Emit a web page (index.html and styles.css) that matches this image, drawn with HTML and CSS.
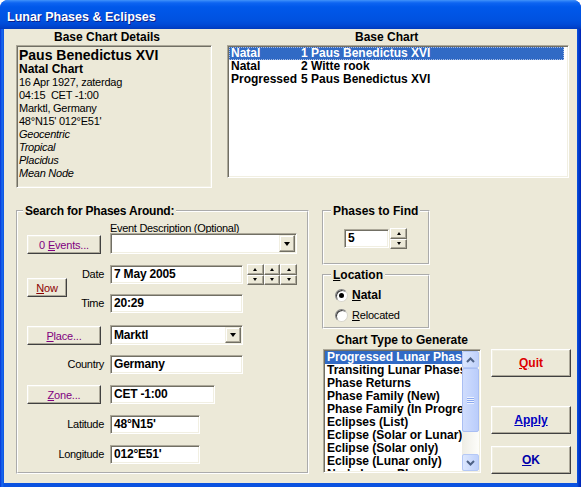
FILE: index.html
```html
<!DOCTYPE html>
<html lang="en">
<head>
<meta charset="utf-8">
<title>Lunar Phases &amp; Eclipses</title>
<link rel="stylesheet" href="styles.css">
</head>
<body>
<div class="window">
  <div class="titlebar"><span class="title">Lunar Phases &amp; Eclipses</span></div>
  <div class="client">
    <div class="top">
      <section class="details-col">
        <div class="hdr hdr-details">Base Chart Details</div>
        <div class="details sunken">
          <div class="d-name">Paus Benedictus XVI</div>
          <div class="d-type">Natal Chart</div>
          <div class="d-line">16 Apr 1927, zaterdag</div>
          <div class="d-line">04:15&nbsp; CET -1:00</div>
          <div class="d-line">Marktl, Germany</div>
          <div class="d-line">48°N15' 012°E51'</div>
          <div class="d-line it">Geocentric</div>
          <div class="d-line it">Tropical</div>
          <div class="d-line it">Placidus</div>
          <div class="d-line it">Mean Node</div>
        </div>
      </section>
      <section class="base-col">
        <div class="hdr hdr-base">Base Chart</div>
        <div class="base-list sunken white">
          <div class="brow sel"><span class="c1">Natal</span><span>1 Paus Benedictus XVI</span></div>
          <div class="brow"><span class="c1">Natal</span><span>2 Witte rook</span></div>
          <div class="brow"><span class="c1">Progressed</span><span>5 Paus Benedictus XVI</span></div>
        </div>
      </section>
    </div>

    <div class="bottom">
      <fieldset class="group search">
        <legend>Search for Phases Around:</legend>
        <div class="search-body">
          <div class="ev-cap">Event Description (Optional)</div>
          <div class="row r-events">
            <div class="lcell"><button class="btn small purple">0 <u>E</u>vents...</button></div>
            <div class="combo sunken white w-event"><span class="val"></span><span class="dd"><i class="tri-down"></i></span></div>
          </div>
          <div class="dt-grid">
            <button class="btn now"><u>N</u>ow</button>
            <div class="lbl l-date">Date</div>
            <div class="field sunken white w-date g-date">7 May 2005</div>
            <div class="spin3">
              <span class="sbtn"><i class="tri-up-s"></i></span>
              <span class="sbtn"><i class="tri-up-s"></i></span>
              <span class="sbtn"><i class="tri-up-s"></i></span>
              <span class="sbtn"><i class="tri-dn-s"></i></span>
              <span class="sbtn"><i class="tri-dn-s"></i></span>
              <span class="sbtn"><i class="tri-dn-s"></i></span>
            </div>
            <div class="lbl l-time">Time</div>
            <div class="field sunken white w-date g-time">20:29</div>
          </div>
          <div class="row r-place">
            <div class="lcell"><button class="btn small purple btn-place"><u>P</u>lace...</button></div>
            <div class="combo sunken white w-place"><span class="val">Marktl</span><span class="dd"><i class="tri-down"></i></span></div>
          </div>
          <div class="row r-country">
            <div class="lcell lbl">Country</div>
            <div class="field sunken white w-date">Germany</div>
          </div>
          <div class="row r-zone">
            <div class="lcell"><button class="btn small purple"><u>Z</u>one...</button></div>
            <div class="field sunken white w-zone">CET -1:00</div>
          </div>
          <div class="row r-lat">
            <div class="lcell lbl">Latitude</div>
            <div class="field sunken white w-lat">48°N15'</div>
          </div>
          <div class="row r-lon">
            <div class="lcell lbl">Longitude</div>
            <div class="field sunken white w-lat">012°E51'</div>
          </div>
        </div>
      </fieldset>

      <div class="right">
        <fieldset class="group phases">
          <legend>Phases to Find</legend>
          <div class="ph-body">
            <div class="field sunken white w-ph">5</div>
            <div class="spin2">
              <span class="sbtn"><i class="tri-up-s"></i></span>
              <span class="sbtn"><i class="tri-dn-s"></i></span>
            </div>
          </div>
        </fieldset>
        <fieldset class="group location">
          <legend><u>L</u>ocation</legend>
          <div class="loc-body">
            <div class="radio-row"><span class="radio on"><i></i></span><span class="rlabel b"><u>N</u>atal</span></div>
            <div class="radio-row"><span class="radio"></span><span class="rlabel"><u>R</u>elocated</span></div>
          </div>
        </fieldset>
        <div class="chart-area">
          <div class="chart-col">
            <div class="hdr hdr-chart">Chart Type to Generate</div>
            <div class="chartlist sunken white">
              <div class="items">
                <div class="crow sel">Progressed Lunar Phases</div>
                <div class="crow">Transiting Lunar Phases</div>
                <div class="crow">Phase Returns</div>
                <div class="crow">Phase Family (New)</div>
                <div class="crow">Phase Family (In Progress)</div>
                <div class="crow">Eclipses (List)</div>
                <div class="crow">Eclipse (Solar or Lunar)</div>
                <div class="crow">Eclipse (Solar only)</div>
                <div class="crow">Eclipse (Lunar only)</div>
                <div class="crow">Node Lunar Phases</div>
              </div>
              <div class="vscroll">
                <div class="sb-btn"><svg width="9" height="6" viewBox="0 0 9 6"><path d="M1 5 L4.5 1.5 L8 5" fill="none" stroke="#4D6185" stroke-width="2"/></svg></div>
                <div class="sb-thumb"><span class="grip"></span></div>
                <div class="sb-btn sb-down"><svg width="9" height="6" viewBox="0 0 9 6"><path d="M1 1 L4.5 4.5 L8 1" fill="none" stroke="#4D6185" stroke-width="2"/></svg></div>
              </div>
            </div>
          </div>
          <div class="btn-col">
            <button class="btn big quit"><u>Q</u>uit</button>
            <button class="btn big apply"><u>Apply</u></button>
            <button class="btn big ok"><u>O</u>K</button>
          </div>
        </div>
      </div>
    </div>
  </div>
</div>
</body>
</html>
```

FILE: styles.css
```css
* { box-sizing: border-box; }
html, body { margin: 0; padding: 0; }
body {
  width: 581px; height: 487px; overflow: hidden; background: #fff;
  font-family: "Liberation Sans", Arial, sans-serif; font-size: 11px; color: #000;
}
.window {
  width: 581px; height: 487px; display: flex; flex-direction: column;
  border-radius: 8px 8px 0 0; overflow: hidden;
  background: linear-gradient(to right, #0831d9 0, #0b4fe0 1px, #1a6af0 2px, #0b52e0 4px, #0b52e0 577px, #0038c8 579px, #0023b5 581px);
}
.titlebar {
  height: 29px; flex: none; padding-left: 7px;
  background: linear-gradient(to bottom, #4595f8 0, #2b80f8 1px, #0d64f1 3px, #0058ea 7px, #0055e5 14px, #0052e0 20px, #004bd8 24px, #0042cb 27px, #0039bc 29px);
}
.title {
  display: block; color: #fff; padding-top: 5px;
  font: bold 12.5px/24px "Liberation Sans", Arial, sans-serif;
  text-shadow: 1px 1px 0 #0a1f8c;
}
.client { flex: 1; margin: 0 4px 4px; background: #ECE9D8; }

.sunken {
  border: 1px solid; border-color: #ACA899 #fff #fff #ACA899;
  box-shadow: inset 1px 1px 0 #716F64, inset -1px -1px 0 #F1EFE2;
}
.white { background: #fff; }

/* top */
.top { display: flex; align-items: flex-start; padding-left: 12px; }
.hdr { font: bold 12px/16px "Liberation Sans", Arial, sans-serif; height: 16px; white-space: nowrap; }
.details-col { width: 196px; }
.hdr-details { padding-left: 38px; }
.details { height: 143px; padding: 1px 0 0 2px; overflow: hidden; }
.d-name { font: bold 14px/16px "Liberation Sans", Arial, sans-serif; white-space: nowrap; }
.d-type { font: bold 12px/13px "Liberation Sans", Arial, sans-serif; }
.d-line { font-size: 11px; line-height: 13px; letter-spacing: -0.25px; white-space: nowrap; }
.d-line.it { font-style: italic; }

.base-col { margin-left: 15px; width: 342px; }
.hdr-base { padding-left: 128px; }
.base-list { height: 133px; padding: 1px 4px 1px 1px; }
.brow { display: flex; height: 13px; font: bold 12px/13px "Liberation Sans", Arial, sans-serif; padding-left: 2px; white-space: nowrap; }
.brow.sel, .crow.sel { background: #316AC5; color: #fff; }
.brow.sel { outline: 1px dotted #a9bde3; outline-offset: -1px; }
.c1 { width: 70px; flex: none; }

/* bottom */
.bottom { display: flex; align-items: flex-start; margin-top: 16px; padding-left: 12px; }
.group { margin: 0; padding: 0; border: 2px groove #fff; min-width: 0; }
.group legend { padding: 0 2px; font: bold 12px/14px "Liberation Sans", Arial, sans-serif; white-space: nowrap; }
.search { width: 293px; height: 270px; }
.search legend { margin-left: 5px; letter-spacing: -0.2px; }
.search-body { padding: 3px 0 0 9px; }
.ev-cap { height: 12px; line-height: 14px; padding-left: 83px; letter-spacing: -0.3px; white-space: nowrap; }
.row { display: flex; align-items: flex-start; }
.lcell { width: 77px; flex: none; margin-right: 6px; }
.lbl { text-align: right; letter-spacing: -0.3px; line-height: 19px; white-space: nowrap; }

.btn {
  background: #ECE9D8; padding: 0; margin: 0;
  border: 1px solid; border-color: #fff #404040 #404040 #fff;
  box-shadow: inset -1px -1px 0 #ACA899, inset 1px 1px 0 #F1EFE2;
  font-family: "Liberation Sans", Arial, sans-serif; font-size: 11px; letter-spacing: -0.2px;
  display: block; text-align: center;
}
.btn.small { width: 74px; height: 19px; }
.purple { color: #800080; }
.r-events { height: 21px; }
.r-events .btn { margin-top: 2px; }

.combo { display: flex; padding: 1px; }
.combo .val { flex: 1; font: bold 12px "Liberation Sans", Arial, sans-serif; padding-left: 2px; letter-spacing: -0.2px; align-self: center; }
.dd {
  width: 16px; flex: none; background: #ECE9D8;
  border: 1px solid; border-color: #F1EFE2 #716F64 #716F64 #F1EFE2;
  box-shadow: inset -1px -1px 0 #ACA899, inset 1px 1px 0 #fff;
  display: flex; align-items: center; justify-content: center;
}
.tri-down { width: 0; height: 0; border-left: 3.5px solid transparent; border-right: 3.5px solid transparent; border-top: 4px solid #000; }
.w-event { width: 187px; height: 21px; }
.w-place { width: 133px; height: 20px; }

.field { font: bold 12px/17px "Liberation Sans", Arial, sans-serif; padding-left: 3px; letter-spacing: -0.2px; height: 19px; white-space: nowrap; }
.w-date { width: 133px; }
.w-zone { width: 105px; }
.w-lat { width: 90px; }
.w-ph { width: 45px; }

.dt-grid {
  display: grid; grid-template-columns: 40px 37px 139px 54px; grid-template-rows: 19px 19px;
  row-gap: 10px; margin-top: 11px;
}
.now { grid-column: 1; grid-row: 1 / 3; align-self: start; margin-top: 13px; width: 40px; height: 19px; color: #8B0000; }
.l-date { grid-column: 2; grid-row: 1; }
.l-time { grid-column: 2; grid-row: 2; }
.g-date { grid-column: 3; grid-row: 1; margin-left: 6px; }
.g-time { grid-column: 3; grid-row: 2; margin-left: 6px; }
.spin3 {
  grid-column: 4; grid-row: 1; margin: -1px 0 0 4px; width: 50px; height: 21px;
  display: grid; grid-template-columns: repeat(3, 1fr); grid-template-rows: 1fr 1fr;
}
.sbtn {
  background: #ECE9D8; border: 1px solid; border-color: #fff #716F64 #716F64 #fff;
  box-shadow: inset -1px -1px 0 #ACA899;
  display: flex; align-items: center; justify-content: center;
}
.tri-up-s { width: 1px; height: 0; border-left: 2px solid transparent; border-right: 2px solid transparent; border-bottom: 3px solid #000; }
.tri-dn-s { width: 1px; height: 0; border-left: 2px solid transparent; border-right: 2px solid transparent; border-top: 3px solid #000; }

.r-place { margin-top: 12px; }
.btn-place { margin-top: 1px; }
.r-country { margin-top: 10px; }
.r-zone { margin-top: 11px; }
.r-lat { margin-top: 11px; }
.r-lon { margin-top: 11px; }

/* right side */
.right { margin-left: 13px; display: flex; flex-direction: column; }
.phases { width: 108px; height: 61px; }
.phases legend, .location legend { margin-left: 7px; }
.ph-body { display: flex; padding: 11px 0 0 20px; }
.spin2 { margin: -1px 0 0 1px; width: 17px; height: 21px; display: grid; grid-template-rows: 1fr 1fr; }
.location { width: 108px; height: 61px; margin-top: 3px; }
.loc-body { padding: 6px 0 0 11px; }
.radio-row { display: flex; align-items: center; height: 14px; }
.radio-row + .radio-row { margin-top: 6px; }
.radio {
  width: 13px; height: 13px; border-radius: 50%; background: #fff; flex: none;
  border: 1px solid; border-color: #808080 #d8d6cc #d8d6cc #808080;
  box-shadow: inset 1px 1px 0 #404040;
  display: flex; align-items: center; justify-content: center; margin-right: 4px;
}
.radio.on i { display: block; width: 5px; height: 5px; border-radius: 50%; background: #000; }
.rlabel { font-size: 11px; letter-spacing: -0.2px; white-space: nowrap; }
.rlabel.b { font: bold 12px "Liberation Sans", Arial, sans-serif; letter-spacing: 0; }

.chart-area { display: flex; margin-top: 4px; }
.chart-col { margin-left: 1px; width: 158px; }
.hdr-chart { text-align: center; line-height: 14px; height: 14px; }
.chartlist { margin-top: 2px; height: 124px; display: flex; padding: 1px; }
.items { flex: 1; overflow: hidden; min-width: 0; }
.crow { height: 13px; font: bold 12px/13px "Liberation Sans", Arial, sans-serif; padding-left: 2px; white-space: nowrap; }
.vscroll {
  width: 17px; flex: none; display: flex; flex-direction: column;
  background: linear-gradient(to right, #EEEDE5, #FDFDFA);
}
.sb-btn {
  height: 17px; flex: none; border: 1px solid #B4C8F6; border-radius: 2px;
  background: linear-gradient(to right, #DCE7FE, #BFD1FB);
  display: flex; align-items: center; justify-content: center;
}
.sb-down { margin-top: auto; }
.sb-thumb {
  height: 64px; flex: none; border: 1px solid #A9BEF3; border-radius: 2px;
  background: linear-gradient(to right, #D0DDFD, #BACDFB);
  display: flex; align-items: center; justify-content: center;
}
.grip { width: 7px; height: 7px; background: repeating-linear-gradient(to bottom, #eef3fe 0, #eef3fe 1px, #8DAAF0 1px, #8DAAF0 2px); }

.btn-col { margin-left: 10px; padding-top: 16px; width: 80px; display: flex; flex-direction: column; }
.btn.big { width: 80px; height: 28px; font: bold 12px "Liberation Sans", Arial, sans-serif; letter-spacing: 0; }
.quit { color: #DD0000; }
.apply { color: #0000C0; margin-top: 29px; }
.ok { color: #0000A8; margin-top: 12px; }
```
